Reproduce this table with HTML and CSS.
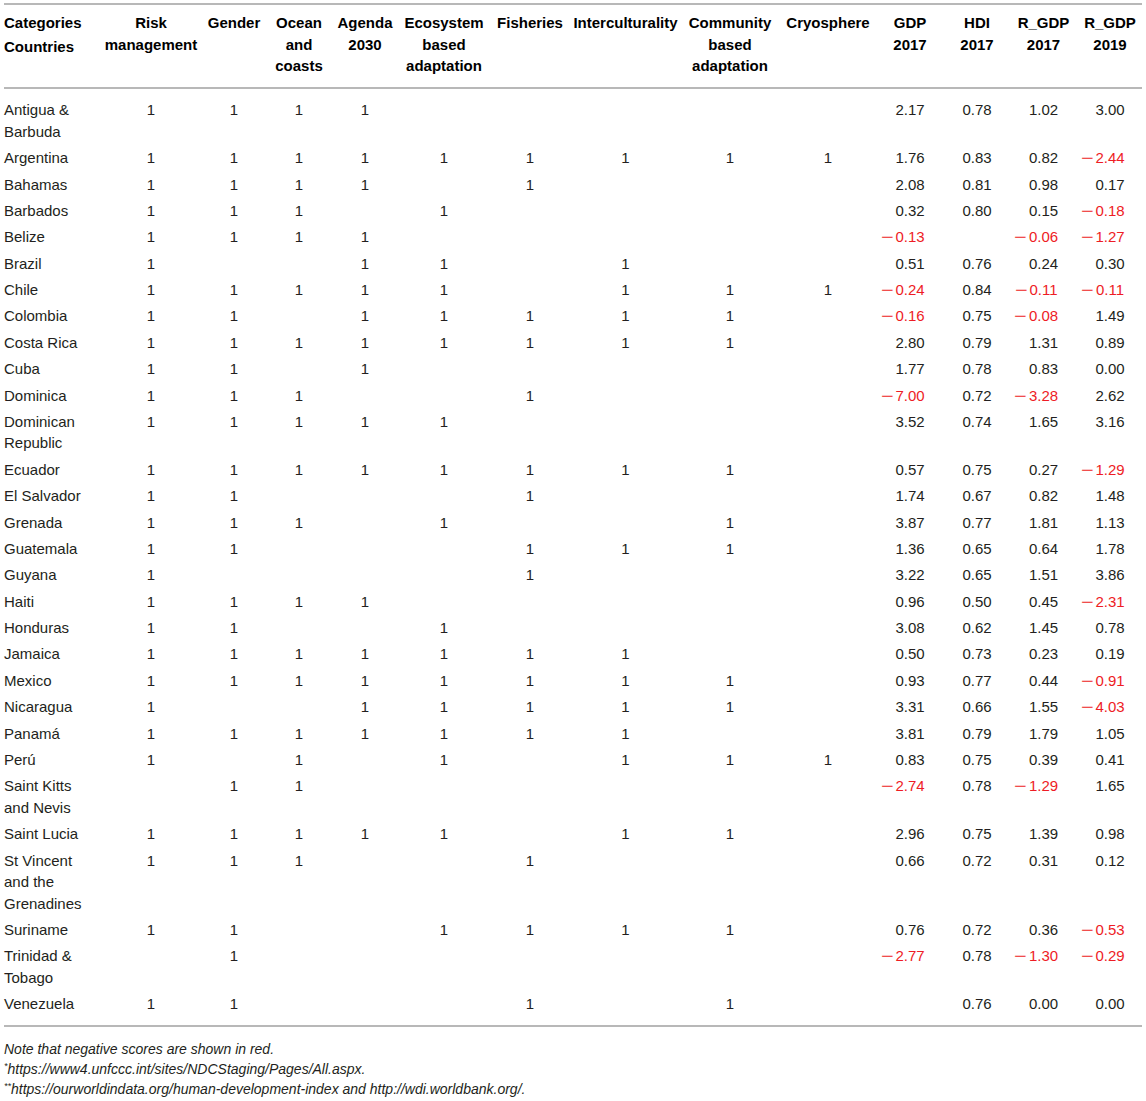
FILE: index.html
```html
<!DOCTYPE html>
<html lang="en">
<head>
<meta charset="utf-8">
<title>NDC categories by country</title>
<link rel="stylesheet" href="styles.css">
</head>
<body>
<div class="wrap">
<table class="data">
<colgroup>
<col class="c-country"><col class="c-risk"><col class="c-gender"><col class="c-ocean"><col class="c-agenda"><col class="c-eco"><col class="c-fish"><col class="c-inter"><col class="c-comm"><col class="c-cryo"><col class="c-gdp"><col class="c-hdi"><col class="c-r17"><col class="c-r19">
</colgroup>
<thead>
<tr>
<th class="first">Categories<span class="sub">Countries</span></th>
<th>Risk<br>management</th>
<th>Gender</th>
<th>Ocean<br>and<br>coasts</th>
<th>Agenda<br>2030</th>
<th>Ecosystem<br>based<br>adaptation</th>
<th>Fisheries</th>
<th>Interculturality</th>
<th>Community<br>based<br>adaptation</th>
<th>Cryosphere</th>
<th>GDP<br>2017</th>
<th>HDI<br>2017</th>
<th>R_GDP<br>2017</th>
<th>R_GDP<br>2019</th>
</tr>
</thead>
<tbody>
<tr><td class="first">Antigua &amp; Barbuda</td><td>1</td><td>1</td><td>1</td><td>1</td><td></td><td></td><td></td><td></td><td></td><td class="n">2.17</td><td class="n">0.78</td><td class="n">1.02</td><td class="n">3.00</td></tr>
<tr><td class="first">Argentina</td><td>1</td><td>1</td><td>1</td><td>1</td><td>1</td><td>1</td><td>1</td><td>1</td><td>1</td><td class="n">1.76</td><td class="n">0.83</td><td class="n">0.82</td><td class="n neg"><span class="m">−</span>2.44</td></tr>
<tr><td class="first">Bahamas</td><td>1</td><td>1</td><td>1</td><td>1</td><td></td><td>1</td><td></td><td></td><td></td><td class="n">2.08</td><td class="n">0.81</td><td class="n">0.98</td><td class="n">0.17</td></tr>
<tr><td class="first">Barbados</td><td>1</td><td>1</td><td>1</td><td></td><td>1</td><td></td><td></td><td></td><td></td><td class="n">0.32</td><td class="n">0.80</td><td class="n">0.15</td><td class="n neg"><span class="m">−</span>0.18</td></tr>
<tr><td class="first">Belize</td><td>1</td><td>1</td><td>1</td><td>1</td><td></td><td></td><td></td><td></td><td></td><td class="n neg"><span class="m">−</span>0.13</td><td class="n"></td><td class="n neg"><span class="m">−</span>0.06</td><td class="n neg"><span class="m">−</span>1.27</td></tr>
<tr><td class="first">Brazil</td><td>1</td><td></td><td></td><td>1</td><td>1</td><td></td><td>1</td><td></td><td></td><td class="n">0.51</td><td class="n">0.76</td><td class="n">0.24</td><td class="n">0.30</td></tr>
<tr><td class="first">Chile</td><td>1</td><td>1</td><td>1</td><td>1</td><td>1</td><td></td><td>1</td><td>1</td><td>1</td><td class="n neg"><span class="m">−</span>0.24</td><td class="n">0.84</td><td class="n neg"><span class="m">−</span>0.11</td><td class="n neg"><span class="m">−</span>0.11</td></tr>
<tr><td class="first">Colombia</td><td>1</td><td>1</td><td></td><td>1</td><td>1</td><td>1</td><td>1</td><td>1</td><td></td><td class="n neg"><span class="m">−</span>0.16</td><td class="n">0.75</td><td class="n neg"><span class="m">−</span>0.08</td><td class="n">1.49</td></tr>
<tr><td class="first">Costa Rica</td><td>1</td><td>1</td><td>1</td><td>1</td><td>1</td><td>1</td><td>1</td><td>1</td><td></td><td class="n">2.80</td><td class="n">0.79</td><td class="n">1.31</td><td class="n">0.89</td></tr>
<tr><td class="first">Cuba</td><td>1</td><td>1</td><td></td><td>1</td><td></td><td></td><td></td><td></td><td></td><td class="n">1.77</td><td class="n">0.78</td><td class="n">0.83</td><td class="n">0.00</td></tr>
<tr><td class="first">Dominica</td><td>1</td><td>1</td><td>1</td><td></td><td></td><td>1</td><td></td><td></td><td></td><td class="n neg"><span class="m">−</span>7.00</td><td class="n">0.72</td><td class="n neg"><span class="m">−</span>3.28</td><td class="n">2.62</td></tr>
<tr><td class="first">Dominican Republic</td><td>1</td><td>1</td><td>1</td><td>1</td><td>1</td><td></td><td></td><td></td><td></td><td class="n">3.52</td><td class="n">0.74</td><td class="n">1.65</td><td class="n">3.16</td></tr>
<tr><td class="first">Ecuador</td><td>1</td><td>1</td><td>1</td><td>1</td><td>1</td><td>1</td><td>1</td><td>1</td><td></td><td class="n">0.57</td><td class="n">0.75</td><td class="n">0.27</td><td class="n neg"><span class="m">−</span>1.29</td></tr>
<tr><td class="first">El Salvador</td><td>1</td><td>1</td><td></td><td></td><td></td><td>1</td><td></td><td></td><td></td><td class="n">1.74</td><td class="n">0.67</td><td class="n">0.82</td><td class="n">1.48</td></tr>
<tr><td class="first">Grenada</td><td>1</td><td>1</td><td>1</td><td></td><td>1</td><td></td><td></td><td>1</td><td></td><td class="n">3.87</td><td class="n">0.77</td><td class="n">1.81</td><td class="n">1.13</td></tr>
<tr><td class="first">Guatemala</td><td>1</td><td>1</td><td></td><td></td><td></td><td>1</td><td>1</td><td>1</td><td></td><td class="n">1.36</td><td class="n">0.65</td><td class="n">0.64</td><td class="n">1.78</td></tr>
<tr><td class="first">Guyana</td><td>1</td><td></td><td></td><td></td><td></td><td>1</td><td></td><td></td><td></td><td class="n">3.22</td><td class="n">0.65</td><td class="n">1.51</td><td class="n">3.86</td></tr>
<tr><td class="first">Haiti</td><td>1</td><td>1</td><td>1</td><td>1</td><td></td><td></td><td></td><td></td><td></td><td class="n">0.96</td><td class="n">0.50</td><td class="n">0.45</td><td class="n neg"><span class="m">−</span>2.31</td></tr>
<tr><td class="first">Honduras</td><td>1</td><td>1</td><td></td><td></td><td>1</td><td></td><td></td><td></td><td></td><td class="n">3.08</td><td class="n">0.62</td><td class="n">1.45</td><td class="n">0.78</td></tr>
<tr><td class="first">Jamaica</td><td>1</td><td>1</td><td>1</td><td>1</td><td>1</td><td>1</td><td>1</td><td></td><td></td><td class="n">0.50</td><td class="n">0.73</td><td class="n">0.23</td><td class="n">0.19</td></tr>
<tr><td class="first">Mexico</td><td>1</td><td>1</td><td>1</td><td>1</td><td>1</td><td>1</td><td>1</td><td>1</td><td></td><td class="n">0.93</td><td class="n">0.77</td><td class="n">0.44</td><td class="n neg"><span class="m">−</span>0.91</td></tr>
<tr><td class="first">Nicaragua</td><td>1</td><td></td><td></td><td>1</td><td>1</td><td>1</td><td>1</td><td>1</td><td></td><td class="n">3.31</td><td class="n">0.66</td><td class="n">1.55</td><td class="n neg"><span class="m">−</span>4.03</td></tr>
<tr><td class="first">Panamá</td><td>1</td><td>1</td><td>1</td><td>1</td><td>1</td><td>1</td><td>1</td><td></td><td></td><td class="n">3.81</td><td class="n">0.79</td><td class="n">1.79</td><td class="n">1.05</td></tr>
<tr><td class="first">Perú</td><td>1</td><td></td><td>1</td><td></td><td>1</td><td></td><td>1</td><td>1</td><td>1</td><td class="n">0.83</td><td class="n">0.75</td><td class="n">0.39</td><td class="n">0.41</td></tr>
<tr><td class="first">Saint Kitts and Nevis</td><td></td><td>1</td><td>1</td><td></td><td></td><td></td><td></td><td></td><td></td><td class="n neg"><span class="m">−</span>2.74</td><td class="n">0.78</td><td class="n neg"><span class="m">−</span>1.29</td><td class="n">1.65</td></tr>
<tr><td class="first">Saint Lucia</td><td>1</td><td>1</td><td>1</td><td>1</td><td>1</td><td></td><td>1</td><td>1</td><td></td><td class="n">2.96</td><td class="n">0.75</td><td class="n">1.39</td><td class="n">0.98</td></tr>
<tr><td class="first">St Vincent and the Grenadines</td><td>1</td><td>1</td><td>1</td><td></td><td></td><td>1</td><td></td><td></td><td></td><td class="n">0.66</td><td class="n">0.72</td><td class="n">0.31</td><td class="n">0.12</td></tr>
<tr><td class="first">Suriname</td><td>1</td><td>1</td><td></td><td></td><td>1</td><td>1</td><td>1</td><td>1</td><td></td><td class="n">0.76</td><td class="n">0.72</td><td class="n">0.36</td><td class="n neg"><span class="m">−</span>0.53</td></tr>
<tr><td class="first">Trinidad &amp; Tobago</td><td></td><td>1</td><td></td><td></td><td></td><td></td><td></td><td></td><td></td><td class="n neg"><span class="m">−</span>2.77</td><td class="n">0.78</td><td class="n neg"><span class="m">−</span>1.30</td><td class="n neg"><span class="m">−</span>0.29</td></tr>
<tr><td class="first">Venezuela</td><td>1</td><td>1</td><td></td><td></td><td></td><td>1</td><td></td><td>1</td><td></td><td class="n"></td><td class="n">0.76</td><td class="n">0.00</td><td class="n">0.00</td></tr>
</tbody>
</table>
<div class="notes">
<p>Note that negative scores are shown in red.</p>
<p><sup>*</sup>https://www4.unfccc.int/sites/NDCStaging/Pages/All.aspx.</p>
<p><sup>**</sup>https://ourworldindata.org/human-development-index and http://wdi.worldbank.org/.</p>
</div>
</div>
</body>
</html>
```

FILE: styles.css
```css
html, body {
  margin: 0;
  padding: 0;
  background: #ffffff;
}

body {
  font-family: "Liberation Sans", Arial, Helvetica, sans-serif;
  color: #231f20;
}

.wrap {
  padding: 3px 4px 0 4px;
}

.data {
  width: 1138px;
  table-layout: fixed;
  border-collapse: separate;
  border-spacing: 0;
  font-size: 15px;
  line-height: 21.5px;
}

.c-country { width: 98px; }
.c-risk { width: 98px; }
.c-gender { width: 68px; }
.c-ocean { width: 62px; }
.c-agenda { width: 70px; }
.c-eco { width: 88px; }
.c-fish { width: 84px; }
.c-inter { width: 107px; }
.c-comm { width: 102px; }
.c-cryo { width: 94px; }
.c-gdp { width: 70px; }
.c-hdi { width: 64px; }
.c-r17 { width: 69px; }
.c-r19 { width: 64px; }

.data th {
  font-weight: bold;
  color: #000000;
  text-align: center;
  vertical-align: top;
  white-space: nowrap;
  padding: 7.25px 0 10.25px 0;
  border-top: 2px solid #b8b8b8;
  border-bottom: 2px solid #b8b8b8;
}

.data th.first {
  text-align: left;
}

.data th .sub {
  display: block;
  margin-top: 2px;
}

.data td {
  text-align: center;
  vertical-align: top;
  padding: 2.45px 0;
}

.data td.first {
  text-align: left;
  padding-right: 12px;
}

.data tbody tr:first-child td {
  padding-top: 10.25px;
}

.data tbody tr:last-child td {
  padding-bottom: 10.25px;
  border-bottom: 2px solid #b8b8b8;
}

.data td.neg {
  color: #ee1c25;
}

.data td .m {
  display: inline-block;
  margin-left: -10.8px;
  margin-right: 2px;
  transform: scaleX(1.45);
  transform-origin: right center;
}

.notes {
  margin-top: 12px;
  font-size: 14px;
  line-height: 20px;
  font-style: italic;
  color: #231f20;
}

.notes p {
  margin: 0;
}

.notes sup {
  font-size: 9px;
  line-height: 0;
  vertical-align: 5px;
}
```
